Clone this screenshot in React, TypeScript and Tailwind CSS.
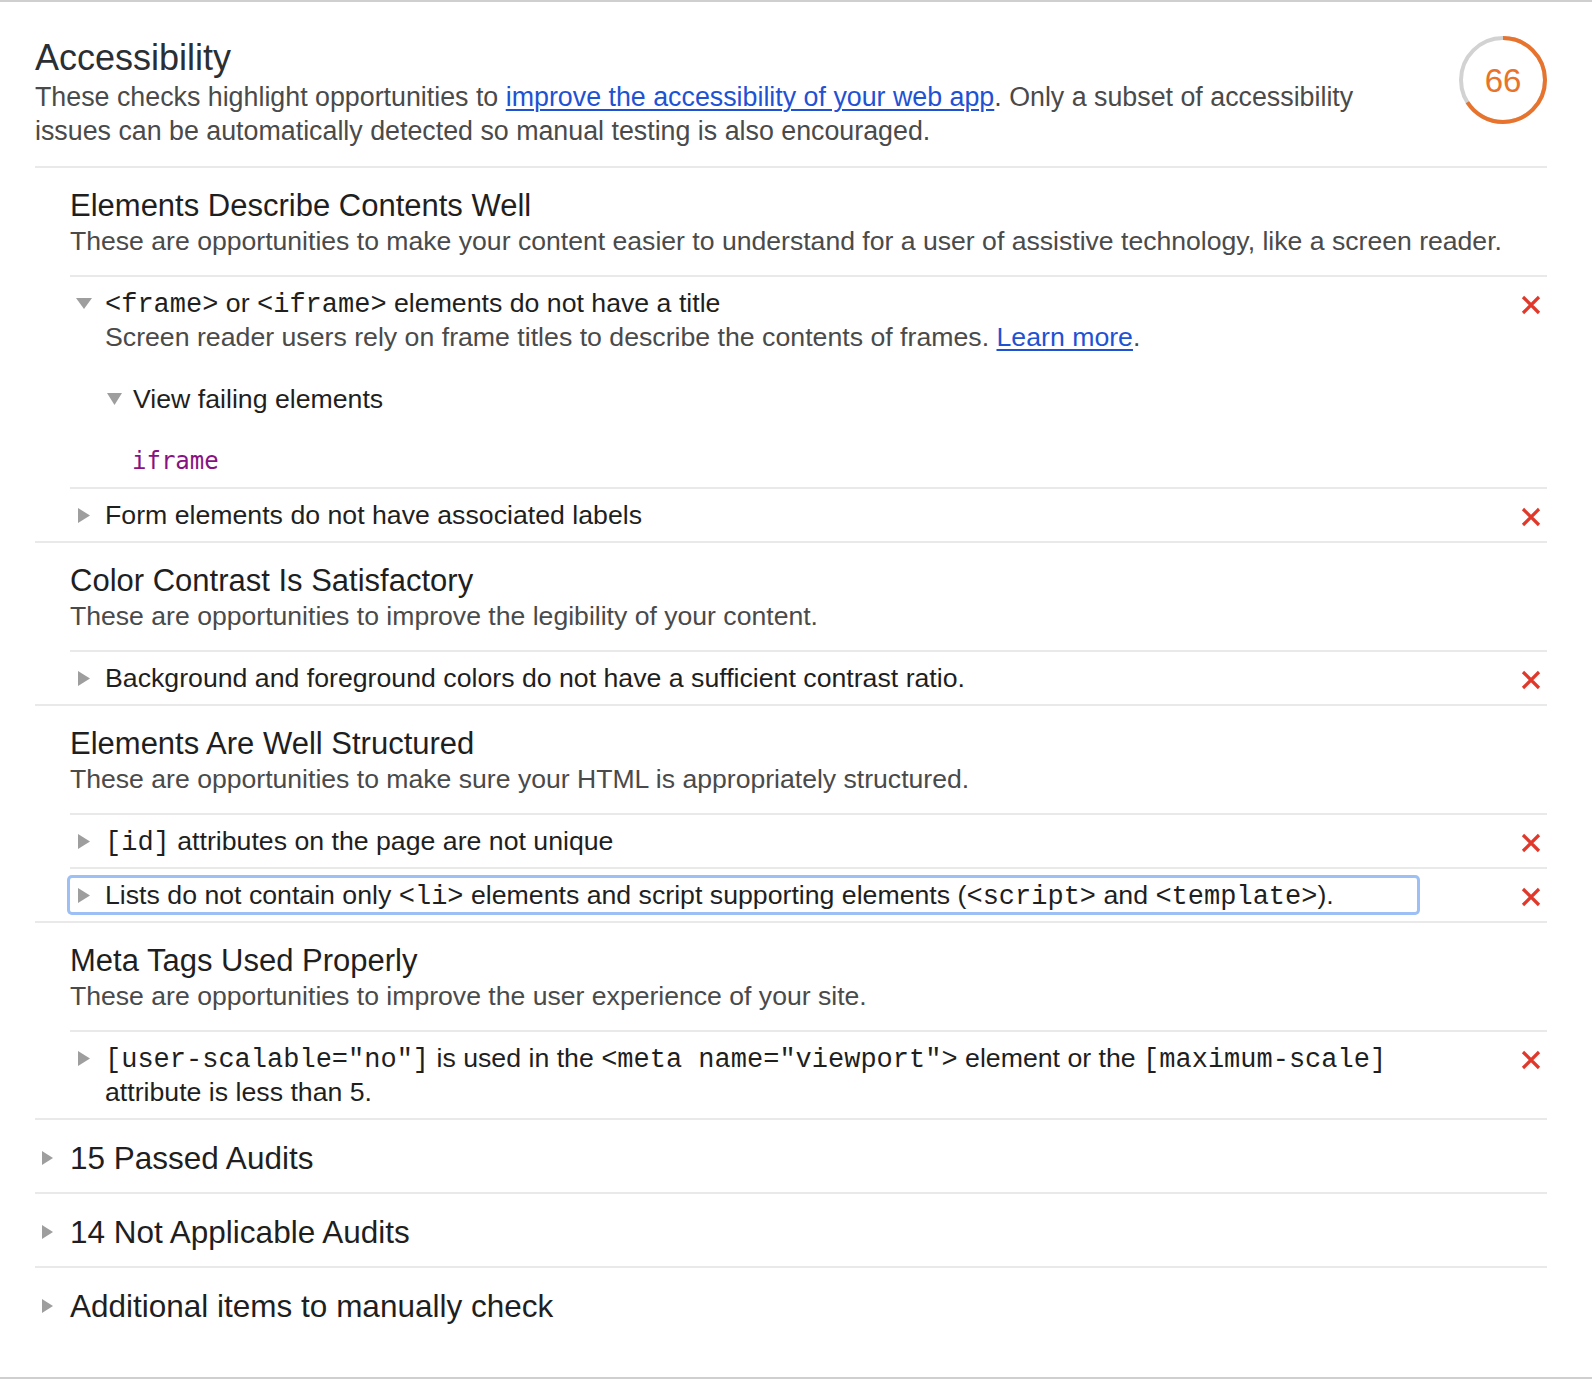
import React from 'react';
import clsx from 'clsx';

const Code = ({ children }: { children: React.ReactNode }) => (
  <code className="font-['Liberation_Mono','Courier_New',monospace] text-[27px] leading-none">{children}</code>
);

const RightArrow = () => (
  <svg width="12" height="15" viewBox="0 0 12 15" className="shrink-0">
    <polygon points="0,0 12,7.5 0,15" fill="#9e9e9e" />
  </svg>
);

const DownArrow = ({ w = 16, h = 11 }: { w?: number; h?: number }) => (
  <svg width={w} height={h} viewBox={`0 0 ${w} ${h}`} className="shrink-0">
    <polygon points={`0,0 ${w},0 ${w / 2},${h}`} fill="#9e9e9e" />
  </svg>
);

const FailIcon = () => (
  <svg width="20" height="20" viewBox="0 0 20 20">
    <path d="M2 2 L18 18 M18 2 L2 18" stroke="#e0392b" strokeWidth="3.2" fill="none" />
  </svg>
);

const Link = ({ children }: { children: React.ReactNode }) => (
  <a href="#" className="text-[#1f52d3] underline underline-offset-[3px] decoration-[1.5px]">
    {children}
  </a>
);

interface AuditProps {
  title: React.ReactNode;
  open?: boolean;
  focused?: boolean;
  children?: React.ReactNode;
}

const Audit = ({ title, open, focused, children }: AuditProps) => (
  <div className="flex border-t-2 border-[#e9e9e9] pt-[9px] pb-[9px]">
    <div className="min-w-0 flex-1">
      <div className={clsx('flex items-start', focused && 'rounded-[2px] shadow-[0_0_0_3px_#9cbff6]')}>
        <div className={clsx('flex h-[34px] w-[35px] shrink-0 items-center', open ? 'pl-[6px]' : 'pl-[8px]')}>
          {open ? <DownArrow /> : <RightArrow />}
        </div>
        <div className="text-[26.7px] leading-[34px] text-[#1f1f1f]">{title}</div>
      </div>
      {children && <div className="pl-[35px]">{children}</div>}
    </div>
    <div className="flex w-[130px] shrink-0 justify-end pt-[9px] pr-[6px]">
      <FailIcon />
    </div>
  </div>
);

interface GroupProps {
  title: string;
  description: string;
  children: React.ReactNode;
}

const Group = ({ title, description, children }: GroupProps) => (
  <section className="border-t-2 border-[#e9e9e9]">
    <div className="pl-[35px] pt-[20px] pb-[17px]">
      <h3 className="text-[31px] leading-[36px] text-[#1f1f1f]">{title}</h3>
      <p className="text-[26.6px] leading-[34px] text-[#4a4a4a]">{description}</p>
    </div>
    <div className="ml-[35px]">{children}</div>
  </section>
);

const Collapsed = ({ label }: { label: string }) => (
  <div className="flex items-center border-t-2 border-[#e9e9e9] pt-[20px] pb-[16px]">
    <div className="flex h-[36px] w-[35px] shrink-0 items-center pl-[7px]">
      <svg width="11" height="14" viewBox="0 0 11 14">
        <polygon points="0,0 11,7 0,14" fill="#9e9e9e" />
      </svg>
    </div>
    <span className="text-[31.5px] leading-[36px] text-[#1f1f1f]">{label}</span>
  </div>
);

const ScoreGauge = ({ score }: { score: number }) => {
  const r = 42;
  const c = 2 * Math.PI * r;
  return (
    <div className="grid h-[88px] w-[88px] shrink-0 place-items-center">
      <svg width="88" height="88" viewBox="0 0 88 88" className="[grid-area:1/1]">
        <circle cx="44" cy="44" r={r} fill="none" stroke="#d2d2d2" strokeWidth="4" />
        <circle
          cx="44"
          cy="44"
          r={r}
          fill="none"
          stroke="#e8732c"
          strokeWidth="4"
          strokeDasharray={`${(c * score) / 100} ${c}`}
          transform="rotate(-90 44 44)"
        />
      </svg>
      <span className="[grid-area:1/1] text-[33px] leading-none text-[#e8732c]">{score}</span>
    </div>
  );
};

export default function App() {
  return (
    <div className="min-h-[1382px] bg-white font-['Liberation_Sans',Arial,sans-serif]">
      <div className="border-y-2 border-[#cfcfcf] pl-[35px] pr-[45px] pb-[37px]">
        {/* Header */}
        <header className="flex items-start pt-[34px] pb-[18px]">
          <div className="flex-1 pt-[2px] pr-[40px]">
            <h2 className="text-[36px] leading-[40px] text-[#2b2f33]">Accessibility</h2>
            <p className="mt-[2px] text-[26.8px] leading-[34px] text-[#4a4a4a]">
              These checks highlight opportunities to{' '}
              <Link>improve the accessibility of your web app</Link>. Only a subset of accessibility
              issues can be automatically detected so manual testing is also encouraged.
            </p>
          </div>
          <ScoreGauge score={66} />
        </header>

        <Group
          title="Elements Describe Contents Well"
          description="These are opportunities to make your content easier to understand for a user of assistive technology, like a screen reader."
        >
          <Audit
            open
            title={
              <>
                <Code>&lt;frame&gt;</Code> or <Code>&lt;iframe&gt;</Code> elements do not have a title
              </>
            }
          >
            <p className="text-[26.7px] leading-[34px] text-[#4a4a4a]">
              Screen reader users rely on frame titles to describe the contents of frames.{' '}
              <Link>Learn more</Link>.
            </p>
            <div className="mt-[28px] flex items-center">
              <div className="flex h-[34px] w-[28px] shrink-0 items-center pl-[2px]">
                <DownArrow w={15} h={12} />
              </div>
              <span className="text-[26.7px] leading-[34px] text-[#1f1f1f]">View failing elements</span>
            </div>
            <div className="mt-[28px] pl-[27px] font-['DejaVu_Sans_Mono',monospace] text-[24px] leading-[34px] text-[#881280]">
              iframe
            </div>
          </Audit>
          <Audit title="Form elements do not have associated labels" />
        </Group>

        <Group
          title="Color Contrast Is Satisfactory"
          description="These are opportunities to improve the legibility of your content."
        >
          <Audit title="Background and foreground colors do not have a sufficient contrast ratio." />
        </Group>

        <Group
          title="Elements Are Well Structured"
          description="These are opportunities to make sure your HTML is appropriately structured."
        >
          <Audit
            title={
              <>
                <Code>[id]</Code> attributes on the page are not unique
              </>
            }
          />
          <Audit
            focused
            title={
              <>
                Lists do not contain only <Code>&lt;li&gt;</Code> elements and script supporting elements (
                <Code>&lt;script&gt;</Code> and <Code>&lt;template&gt;</Code>).
              </>
            }
          />
        </Group>

        <Group
          title="Meta Tags Used Properly"
          description="These are opportunities to improve the user experience of your site."
        >
          <Audit
            title={
              <>
                <Code>[user-scalable="no"]</Code> is used in the <Code>&lt;meta name="viewport"&gt;</Code>{' '}
                element or the <Code>[maximum-scale]</Code> attribute is less than 5.
              </>
            }
          />
        </Group>

        <Collapsed label="15 Passed Audits" />
        <Collapsed label="14 Not Applicable Audits" />
        <Collapsed label="Additional items to manually check" />
      </div>
    </div>
  );
}
